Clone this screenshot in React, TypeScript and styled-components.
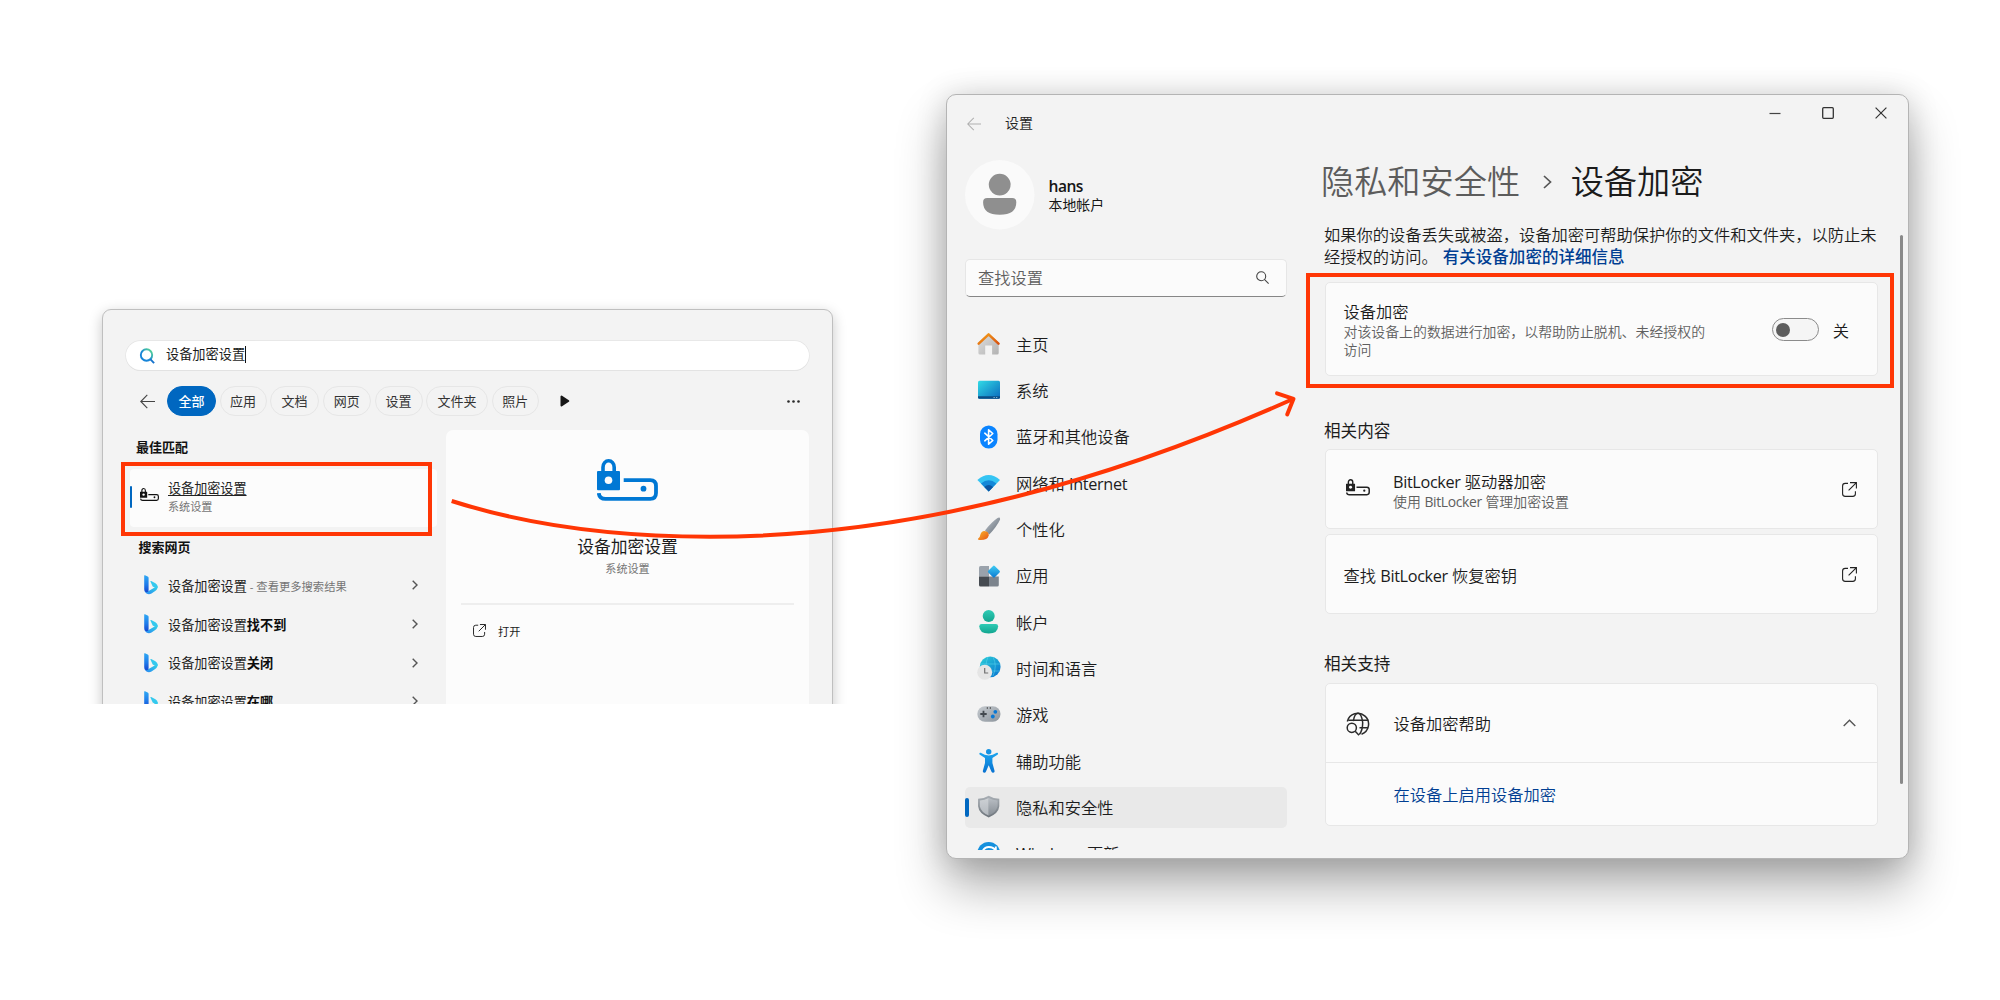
import React from "react";
import styled, { createGlobalStyle, css } from "styled-components";

const RED = "#ff3605";
const FONT = `"Open Sans", "Noto Sans CJK SC", sans-serif`;

const GlobalStyle = createGlobalStyle`
  * { box-sizing: border-box; }
  body {
    margin: 0;
    background: #fff;
    font-family: ${FONT};
    color: #1b1b1b;
    overflow: hidden;
  }
  svg { display: block; flex: none; }
`;

const Desktop = styled.main`
  position: relative;
  width: 2000px;
  height: 1000px;
  overflow: hidden;
`;

/* ---------- search flyout ---------- */

const FlyoutCrop = styled.div`
  position: absolute;
  left: 72px;
  top: 280px;
  width: 790px;
  height: 424px;
  padding: 29px 0 0 30px;
  overflow: hidden;
`;

const Flyout = styled.section`
  width: 731px;
  height: 460px;
  padding: 31px 23px 0;
  border: 1px solid #bfbfbf;
  border-radius: 9px;
  background: #f3f3f3;
  box-shadow: 0 4px 14px rgba(0, 0, 0, 0.22);
`;

const SearchPill = styled.div`
  display: flex;
  align-items: center;
  gap: 11px;
  height: 29px;
  padding-left: 13px;
  border-radius: 15px;
  background: #fff;
  box-shadow: 0 0 0 0.7px #e4e4e4, 0 1px 0 #dedede;
  font-size: 13.2px;
  line-height: 20px;
`;

const Query = styled.span`
  height: 17px;
  margin-bottom: 2px;
  line-height: 17px;
  border-right: 1px solid #111;
`;

const Filters = styled.div`
  display: flex;
  align-items: center;
  height: 30px;
  margin-top: 16px;
  padding: 0 9px 0 14px;
`;

const ChipRow = styled.div`
  display: flex;
  gap: 3.5px;
  margin: 0 21px 0 12px;
`;

const Chip = styled.span<{ $w: number; $active?: boolean }>`
  display: flex;
  align-items: center;
  justify-content: center;
  width: ${(p) => p.$w}px;
  height: 30px;
  padding-bottom: 2px;
  border: 1px solid #e6e6e6;
  border-radius: 15px;
  font-size: 13px;
  color: #333;
  ${(p) =>
    p.$active &&
    css`
      border-color: #0067c0;
      background: #0067c0;
      color: #fff;
      font-weight: 500;
    `}
`;

const Spacer = styled.span`
  flex: 1;
`;

const FlyoutBody = styled.div`
  display: grid;
  grid-template-columns: 320px 363px;
  margin-top: 13.5px;
`;

const Results = styled.div`
  padding-top: 7px;
`;

const GroupTitle = styled.h2<{ $indent: number; $top?: number }>`
  margin: ${(p) => p.$top ?? 0}px 0 0 ${(p) => p.$indent}px;
  font-size: 13px;
  line-height: 20px;
  font-weight: 700;
  color: #111;
`;

const BestMatch = styled.div`
  display: flex;
  align-items: center;
  width: 307.5px;
  height: 58px;
  margin: 12px 0 0 3.5px;
  padding-bottom: 2px;
  border-radius: 4px;
  background: #fcfcfc;
`;

const AccentBar = styled.span<{ $w: number; $h: number }>`
  flex: none;
  width: ${(p) => p.$w}px;
  height: ${(p) => p.$h}px;
  border-radius: 2px;
  background: #0067c0;
`;

const BestIcon = styled.span`
  margin: 0 9px 3px 8px;
`;

const BestText = styled.div`
  display: flex;
  flex-direction: column;
`;

const BestTitle = styled.span`
  font-size: 13.1px;
  line-height: 19px;
  text-decoration: underline;
  text-underline-offset: 1.5px;
  color: #222;
`;

const Caption = styled.span`
  font-size: 11.1px;
  line-height: 17px;
  color: #757575;
`;

const WebList = styled.div`
  margin-top: 9px;
`;

const WebRow = styled.div`
  display: flex;
  align-items: center;
  height: 38.7px;
  padding: 0 28px 0 17.5px;
  font-size: 13.15px;
  color: #1d1d1d;
`;

const WebLabel = styled.span`
  margin-left: 10.5px;
  white-space: pre;
  b { font-weight: 700; color: #0c0c0c; }
`;

const WebNote = styled(Caption)`
  font-size: 11.3px;
`;

const Detail = styled.div`
  display: flex;
  flex-direction: column;
  align-items: center;
  height: 320px;
  padding: 29.5px 15px 0;
  border-radius: 7px;
  background: #fcfcfc;
`;

const DetailTitle = styled.h1`
  margin: 33.5px 0 0;
  font-size: 16.8px;
  line-height: 24px;
  font-weight: 400;
  color: #1a1a1a;
`;

const DetailCaption = styled(Caption)`
  margin-top: 1px;
`;

const DetailRule = styled.hr`
  width: 333px;
  height: 2px;
  margin: 26px 0 0;
  border: 0;
  background: #eee;
`;

const OpenAction = styled.div`
  display: flex;
  align-items: center;
  gap: 12.5px;
  align-self: flex-start;
  margin: 16px 0 0 11.5px;
  height: 20px;
  font-size: 11.2px;
`;

/* ---------- settings window ---------- */

const SettingsWindow = styled.section`
  position: absolute;
  left: 946px;
  top: 94px;
  width: 963px;
  height: 765px;
  border: 1px solid #b4b4b4;
  border-radius: 10px;
  background: #f3f3f3;
  box-shadow: 0 28px 50px rgba(0, 0, 0, 0.31), 0 2px 30px rgba(0, 0, 0, 0.17);
  font-weight: 350;
`;

const TitleBar = styled.header`
  display: flex;
  justify-content: space-between;
  height: 57px;
`;

const TitleLeft = styled.div`
  display: flex;
  align-items: center;
  gap: 24px;
  padding: 0 0 0 20px;
  font-size: 14px;
  line-height: 20px;
  color: #222;
`;

const TitleText = styled.span`
  margin-bottom: 1px;
`;

const WindowButtons = styled.div`
  display: flex;
  height: 36px;
  margin-right: 1px;
`;

const WindowButton = styled.button`
  display: flex;
  align-items: center;
  justify-content: center;
  width: 52.8px;
  padding: 0;
  border: 0;
  background: none;
`;

const SettingsBody = styled.div`
  display: grid;
  grid-template-columns: 360px 575px 3px;
  padding-left: 18px;
`;

const Sidebar = styled.aside`
  width: 322px;
  padding-top: 8px;
`;

const Profile = styled.div`
  display: flex;
  align-items: center;
  gap: 14px;
  height: 69.5px;
`;

const ProfileText = styled.div`
  display: flex;
  flex-direction: column;
  padding-top: 1px;
  font-size: 13.9px;
  line-height: 18px;
  font-weight: 400;
  color: #161616;
`;

const ProfileName = styled.strong`
  font-size: 15.6px;
  line-height: 20px;
  font-weight: 600;
  letter-spacing: -0.5px;
`;

const FindBox = styled.div`
  display: flex;
  align-items: center;
  justify-content: space-between;
  height: 38px;
  margin-top: 29.5px;
  padding: 0 17px 2px 12px;
  border: 1px solid #e6e6e6;
  border-bottom-color: #868686;
  border-radius: 5px;
  background: #fbfbfb;
  font-size: 16.25px;
  color: #5f5f5f;
`;

const Nav = styled.nav`
  display: flex;
  flex-direction: column;
  gap: 5px;
  height: 526px;
  margin-top: 26.5px;
  overflow: hidden;
`;

const NavItem = styled.div<{ $selected?: boolean }>`
  display: flex;
  flex: none;
  align-items: center;
  height: 41.33px;
  padding-left: ${(p) => (p.$selected ? 0 : 12)}px;
  border-radius: 5px;
  background: ${(p) => (p.$selected ? "#e9e9e9" : "transparent")};
  font-size: 16.25px;
  color: #1c1c1c;
  svg { margin-left: ${(p) => (p.$selected ? 8 : 0)}px; }
`;

const NavLabel = styled.span`
  margin: 0 0 1px 15px;
`;

const Latin = styled.span`
  font-weight: 400;
  letter-spacing: -0.35px;
`;

const Main = styled.div`
  width: 552.5px;
  padding-top: 8px;
`;

const Crumbs = styled.h1`
  display: flex;
  align-items: center;
  height: 44px;
  margin: 0 0 0 -4px;
  font-size: 33.2px;
  line-height: 44px;
  font-weight: 350;
  white-space: nowrap;
`;

const CrumbParent = styled.span`
  color: #5c5c5c;
`;

const CrumbArrow = styled.span`
  display: flex;
  width: 50.5px;
  padding: 0 0 0 23px;
`;

const Intro = styled.p`
  margin: 19.5px 0 0 -1px;
  font-size: 16.25px;
  line-height: 22px;
  white-space: nowrap;
  color: #1c1c1c;
`;

const Link = styled.a`
  color: #003e92;
`;

const IntroLink = styled(Link)`
  margin-left: 5px;
  font-weight: 500;
  font-size: 16.55px;
`;

const Card = styled.div<{ $h: number; $top: number }>`
  display: flex;
  align-items: center;
  height: ${(p) => p.$h}px;
  margin-top: ${(p) => p.$top}px;
  padding: 0 20px 0 17.5px;
  border: 1px solid #e7e7e7;
  border-radius: 5px;
  background: #fbfbfb;
  font-size: 16.25px;
`;

const CardText = styled.div<{ $left?: number; $drop?: number }>`
  display: flex;
  flex-direction: column;
  flex: 1;
  padding-top: ${(p) => p.$drop ?? 0}px;
  margin-left: ${(p) => p.$left ?? 0}px;
  line-height: 21px;
`;

const CardNote = styled.span`
  font-size: 13.92px;
  line-height: 18px;
  color: #5f5f5f;
`;

const DriveSlot = styled.span`
  margin: 0 0 3px 2px;
`;

const ExternalSlot = styled.span`
  margin-top: 2px;
`;

const Toggle = styled.span`
  display: flex;
  align-items: center;
  width: 47px;
  height: 23.5px;
  margin: 1px 13.5px 0 0;
  padding-left: 3px;
  border: 1px solid #8b8b8b;
  border-radius: 12px;
  background: #f5f5f5;
`;

const Knob = styled.span`
  width: 14px;
  height: 14px;
  border-radius: 50%;
  background: #5d5d5d;
`;

const ToggleState = styled.span`
  margin: 1px 7.5px 0 0;
`;

const SectionTitle = styled.h2<{ $top: number }>`
  margin: ${(p) => p.$top}px 0 0 -1px;
  font-size: 16.6px;
  line-height: 24px;
  font-weight: 400;
  color: #1c1c1c;
`;

const Expander = styled.div`
  height: 143px;
  margin-top: 7.5px;
  border: 1px solid #e7e7e7;
  border-radius: 5px;
  background: #fbfbfb;
  font-size: 16.25px;
`;

const ExpanderHead = styled.div`
  display: flex;
  align-items: center;
  height: 78.5px;
  padding: 3px 20.5px 0 19.5px;
  border-bottom: 1px solid #e7e7e7;
`;

const ExpandChevron = styled.span`
  margin-bottom: 2px;
`;

const ExpanderBody = styled.div`
  padding: 20px 0 0 67.5px;
  line-height: 24px;
`;

const ScrollThumb = styled.div`
  width: 3px;
  height: 549px;
  margin-top: 83px;
  border-radius: 2px;
  background: #8a8a8a;
`;

/* ---------- annotations over the windows ---------- */

const Callout = styled.div<{ $x: number; $y: number; $w: number; $h: number }>`
  position: absolute;
  left: ${(p) => p.$x}px;
  top: ${(p) => p.$y}px;
  width: ${(p) => p.$w}px;
  height: ${(p) => p.$h}px;
  border: 4px solid ${RED};
`;

const ArrowLayer = styled.svg`
  position: absolute;
  left: 0;
  top: 0;
`;

/* ---------- icons ---------- */

const DriveLock = ({ w, color, hole = "#fcfcfc" }: { w: number; color: string; hole?: string }) => (
  <svg width={w} height={(w * 42) / 61} viewBox="0 0 61 42">
    <path d="M6 12.5V8.2a5.6 6.4 0 0 1 11.2 0v4.3" fill="none" stroke={color} strokeWidth="3.6" />
    <rect x="0" y="12" width="23" height="19.2" rx="1" fill={color} />
    <circle cx="11.5" cy="21.2" r="3.8" fill={hole} />
    <path
      d="M26.7 21.2h26.5q5.8 0 5.8 5.8v7q0 5.8-5.8 5.8H8.5q-6.2 0-6.7-5.6"
      fill="none"
      stroke={color}
      strokeWidth="3.8"
    />
    <circle cx="46.5" cy="29.7" r="2.9" fill={color} />
  </svg>
);

const BackArrow = ({ color, w = 15 }: { color: string; w?: number }) => (
  <svg width={w} height={w} viewBox="0 0 15 15" fill="none" stroke={color} strokeWidth="1.1">
    <path d="M15 7.5H.8M7.3.9.8 7.5l6.5 6.6" />
  </svg>
);

const OpenIcon = ({ w }: { w: number }) => (
  <svg width={w} height={w} viewBox="0 0 15 15" fill="none" stroke="#222" strokeWidth="1.1">
    <path d="M6 1.4H3.2Q.6 1.4.6 4v7.8q0 2.6 2.6 2.6h7.6q2.6 0 2.6-2.6V9.2" />
    <path d="M8 .6h6.400v6M14.2.8 6.6 8.4" />
  </svg>
);

const Chevron = ({ w, h, d, sw = 1.4 }: { w: number; h: number; d: string; sw?: number }) => (
  <svg width={w} height={h} viewBox={`0 0 ${w} ${h}`} fill="none" stroke="#555" strokeWidth={sw}>
    <path d={d} />
  </svg>
);

const BingIcon = () => (
  <svg width="14" height="20" viewBox="0 0 14 20">
    <defs>
      <linearGradient id="bStem" x1="0" y1="0" x2="0" y2="1">
        <stop offset="0" stopColor="#2fa9f4" />
        <stop offset="0.55" stopColor="#1f7bea" />
        <stop offset="1" stopColor="#1546cf" />
      </linearGradient>
      <linearGradient id="bBowl" x1="0" y1="1" x2="1" y2="0">
        <stop offset="0" stopColor="#2a86f3" />
        <stop offset="1" stopColor="#2fd8e4" />
      </linearGradient>
    </defs>
    <path d="M.4 15.200q1.500 2.200 4.200.9l5.600-3.300 3.400-1.800q.4 3.200-2.400 4.900l-3.700 2.600q-2.600 1.300-5 0-2-1.200-2.100-3.300z" fill="url(#bBowl)" />
    <path d="M.2.600Q.3 0 1 .3l2.700 1.200q.9.4.9 1.400v12.600q-.2 1.700-1.900 1.800Q.2 17 .2 14z" fill="url(#bStem)" />
    <path d="M6.300 6.300q.2-.6.900-.3l4.200 2.200q2.500 1.300 2.300 4-.5 1.300-2.200.8L8.700 11.600z" fill="#34c9ee" />
  </svg>
);

const NavGlyph = ({ children }: { children: React.ReactNode }) => (
  <svg width="24" height="24" viewBox="0 0 24 24">{children}</svg>
);

const Grad = ({ id, a, b, x2 = 1, y2 = 1 }: { id: string; a: string; b: string; x2?: number; y2?: number }) => (
  <linearGradient id={id} x1="0" y1="0" x2={x2} y2={y2}>
    <stop offset="0" stopColor={a} />
    <stop offset="1" stopColor={b} />
  </linearGradient>
);

const HomeIcon = () => (
  <NavGlyph>
    <Grad id="hw" a="#dedede" b="#b2b2b2" />
    <Grad id="hr" a="#f6a21a" b="#d9520f" />
    <path d="M1.400 10.500 11.500 1.500l10.200 9V21q0 1.600-1.600 1.600h-5V13.500H8.200v9.100H3q-1.600 0-1.600-1.600z" fill="url(#hw)" />
    <path d="m1.700 11.600 9.900-9.300 9.900 9.300" fill="none" stroke="url(#hr)" strokeWidth="2.500" strokeLinecap="round" strokeLinejoin="round" />
  </NavGlyph>
);

const SystemIcon = () => (
  <NavGlyph>
    <Grad id="sy" a="#31dbe6" b="#0a68bd" />
    <rect x="1" y="2.800" width="22" height="18" rx="1.500" fill="url(#sy)" />
    <path d="M1 18.300h22v1q0 1.500-1.500 1.500h-19Q1 20.800 1 19.300z" fill="#0b4c86" />
    <path d="M16.500 19.500h1.300M19 19.500h1.300" stroke="#9cd" strokeWidth=".8" />
  </NavGlyph>
);

const BluetoothIcon = () => (
  <NavGlyph>
    <rect x="3" y=".5" width="17.500" height="23" rx="8.700" fill="#0a84ff" />
    <path d="m7.800 8.200 8 7.300-4.200 3.700V4.800l4.200 3.700-8 7.300" fill="none" stroke="#fff" strokeWidth="1.600" strokeLinejoin="round" strokeLinecap="round" />
  </NavGlyph>
);

const WifiIcon = () => (
  <NavGlyph>
    <path d="M.4 8.900Q11.700-.9 23 8.900L11.700 20.600z" fill="#35c4f3" />
    <path d="M4 12.600q7.700-6.800 15.400 0L11.700 20.600z" fill="#1488d8" />
    <path d="M7.300 16q4.400-3.900 8.800 0l-4.400 4.600z" fill="#0c56a3" />
  </NavGlyph>
);

const BrushIcon = () => (
  <NavGlyph>
    <Grad id="bh" a="#c1c7ce" b="#606a75" />
    <Grad id="bt" a="#fbb62b" b="#e65514" />
    <path d="M8 13.500Q14 5.500 20.500 1q3-1.300 2.500 1.700Q19.500 10 12.200 17.500z" fill="url(#bh)" />
    <path d="M7.300 13.900q4.700.3 4.500 4.500-1.500 5-9.300 4.600-2.300-.2-1.300-1.400 1.900-1.400 2.200-4.200 1-3.300 3.900-3.500z" fill="url(#bt)" />
  </NavGlyph>
);

const AppsIcon = () => (
  <NavGlyph>
    <Grad id="ap" a="#41cff5" b="#0876cf" />
    <path d="M2 3.600q0-1.600 1.600-1.600H12v10.500H2z" fill="#9aa2ab" />
    <path d="M2 12.500h10v10H3.600Q2 22.500 2 20.900z" fill="#464b51" />
    <path d="M12 12.500h9.800v8.400q0 1.600-1.600 1.600H12z" fill="#7c848d" />
    <rect x="12.300" y="3.100" width="9.200" height="9.200" rx="1.200" transform="rotate(45 16.900 7.700)" fill="url(#ap)" />
  </NavGlyph>
);

const AccountIcon = () => (
  <NavGlyph>
    <Grad id="ac" a="#2fcbb5" b="#12a58f" x2={0} />
    <circle cx="11.700" cy="6" r="6" fill="url(#ac)" />
    <path d="M4.600 14h14.200q2.300 0 2.300 2.300 0 7.200-9.400 7.200t-9.400-7.200Q2.300 14 4.600 14z" fill="url(#ac)" />
  </NavGlyph>
);

const TimeIcon = () => (
  <NavGlyph>
    <Grad id="gl" a="#2cd0d8" b="#0871cf" />
    <circle cx="13.200" cy="10.800" r="10.400" fill="url(#gl)" />
    <path d="M3.500 8h20M11 .8q-4 9 0 19M16 .8q4.500 9 0 19M4 15h19" fill="none" stroke="#62dcf0" strokeWidth=".8" opacity=".6" />
    <circle cx="7.700" cy="16.200" r="7.500" fill="#e5e5e5" />
    <path d="M7.700 12v5h3.500" fill="none" stroke="#707070" strokeWidth="1.200" />
  </NavGlyph>
);

const GameIcon = () => (
  <NavGlyph>
    <Grad id="gm" a="#c6cbd0" b="#8c949c" />
    <rect x=".3" y="3.300" width="23.200" height="15.500" rx="7.700" fill="url(#gm)" />
    <path d="M6.500 7.800v6.400M3.300 11h6.400" stroke="#43494f" strokeWidth="1.800" />
    <path d="M10.300 4v2M13.300 4v2" stroke="#555" />
    <circle cx="18.300" cy="8.800" r="1.900" fill="#0a78d4" />
    <circle cx="15.800" cy="13.500" r="1.900" fill="#0a78d4" />
  </NavGlyph>
);

const AccessIcon = () => (
  <NavGlyph>
    <Grad id="as" a="#1ba4ee" b="#0871d0" x2={0} />
    <circle cx="11.700" cy="2.800" r="2.700" fill="#1592e2" />
    <path d="M3.700 3.800q-1.900-.4-1.100 1.700L8 9v5l-2.200 8q-.2 1.500 1.400 1.800 1.400 0 1.800-1.400l2.700-6.100 2.700 6.100q.4 1.400 1.800 1.400 1.600-.3 1.400-1.800L15.400 14V9l5.400-3.500q.8-2.100-1.100-1.700-4 2.600-8 2.600t-8-2.600z" fill="url(#as)" />
  </NavGlyph>
);

const ShieldIcon = () => (
  <NavGlyph>
    <Grad id="shRim" a="#a9afb5" b="#6d747b" x2={0} />
    <Grad id="shL" a="#cdd1d5" b="#b3b8be" x2={0} />
    <Grad id="shR" a="#b9bec4" b="#878e95" x2={0} />
    <path d="M11.700.8q4.500 2.900 10.600 3v7.500q-.7 7.300-10.600 11.100Q1.800 18.600 1.100 11.300V3.800q6.100-.1 10.600-3z" fill="url(#shRim)" />
    <path d="M11.700 3Q7.500 5.300 2.800 5.600v5.700q1.400 6.200 8.900 9.300z" fill="url(#shL)" />
    <path d="M11.700 3q4.200 2.300 8.900 2.600v5.700q-1.400 6.200-8.900 9.300z" fill="url(#shR)" />
  </NavGlyph>
);

const UpdateIcon = () => (
  <NavGlyph>
    <circle cx="11.700" cy="11.500" r="11.500" fill="#1590dd" />
    <path d="M5 10.500q2-5.500 6.800-5.500T18.500 8.500M18.800 4.500V9h-4.300" fill="none" stroke="#fff" strokeWidth="1.900" />
  </NavGlyph>
);

const GlobeSearch = () => (
  <svg width="24" height="24" viewBox="0 0 24 24" fill="none" stroke="#2b2b2b" strokeWidth="1.500">
    <path d="M1.300 9.500A10.800 10.800 0 1 1 15.500 22.300" />
    <path d="M2.300 8.200h20M13.500 15.800h8.700" />
    <path d="M7.300 9.200Q8.500 1.200 12 1.200t4.700 9.300q0 8-3.400 12" />
    <circle cx="5.800" cy="15.800" r="4.600" />
    <path d="m9.200 19.200 3.800 4" />
  </svg>
);

const Avatar = () => (
  <svg width="69.500" height="69.500" viewBox="0 0 69.500 69.500">
    <circle cx="34.750" cy="34.750" r="34.750" fill="#fafafa" />
    <circle cx="34.700" cy="24.600" r="10.900" fill="#8f8f8f" />
    <path d="M22.200 38h25q4.100 0 4.100 4.200 0 12.500-16.600 12.500T18.100 42.200Q18.100 38 22.200 38z" fill="#8f8f8f" />
  </svg>
);

/* ---------- page ---------- */

const chips: [string, number][] = [
  ["全部", 49],
  ["应用", 47],
  ["文档", 49],
  ["网页", 48.5],
  ["设置", 48],
  ["文件夹", 62],
  ["照片", 47.5],
];

const webRows = [
  { suffix: "", note: " - 查看更多搜索结果" },
  { suffix: "找不到" },
  { suffix: "关闭" },
  { suffix: "在哪" },
];

const navItems: [string, React.FC][] = [
  ["主页", HomeIcon],
  ["系统", SystemIcon],
  ["蓝牙和其他设备", BluetoothIcon],
  ["网络和 Internet", WifiIcon],
  ["个性化", BrushIcon],
  ["应用", AppsIcon],
  ["帐户", AccountIcon],
  ["时间和语言", TimeIcon],
  ["游戏", GameIcon],
  ["辅助功能", AccessIcon],
  ["隐私和安全性", ShieldIcon],
  ["Windows 更新", UpdateIcon],
];

/* Sets Latin words slightly tighter than the Chinese text round them. */
const Mixed = ({ text }: { text: string }) => (
  <span>
    {text.split(/([A-Za-z]+)/).map((part, i) => (i % 2 ? <Latin key={i}>{part}</Latin> : part))}
  </span>
);

const SearchFlyout = () => (
  <FlyoutCrop>
    <Flyout>
      <SearchPill>
        <svg width="16" height="16" viewBox="0 0 16 16" fill="none" strokeWidth="1.900">
          <linearGradient id="sg" x1="0" y1="1" x2="1" y2="0">
            <stop offset="0.400" stopColor="#1684d8" />
            <stop offset="1" stopColor="#5fe08a" />
          </linearGradient>
          <circle cx="7.500" cy="7" r="5.700" stroke="url(#sg)" />
          <path d="m11.500 11.300 3.600 3.800" stroke="#1673cc" />
        </svg>
        <Query>设备加密设置</Query>
      </SearchPill>
      <Filters>
        <BackArrow color="#444" />
        <ChipRow>
          {chips.map(([label, w], i) => (
            <Chip key={label} $w={w} $active={i === 0}>{label}</Chip>
          ))}
        </ChipRow>
        <svg width="10" height="12" viewBox="0 0 10 12">
          <path d="M1.500 1.500v9L8.300 6z" fill="#161616" stroke="#161616" strokeWidth="2" strokeLinejoin="round" />
        </svg>
        <Spacer />
        <svg width="13" height="3" viewBox="0 0 13 3" fill="#2a2a2a">
          <circle cx="1.500" cy="1.500" r="1.300" />
          <circle cx="6.500" cy="1.500" r="1.300" />
          <circle cx="11.500" cy="1.500" r="1.300" />
        </svg>
      </Filters>
      <FlyoutBody>
        <Results>
          <GroupTitle $indent={10}>最佳匹配</GroupTitle>
          <BestMatch>
            <AccentBar $w={2.5} $h={22} />
            <BestIcon><DriveLock w={19} color="#111" /></BestIcon>
            <BestText>
              <BestTitle>设备加密设置</BestTitle>
              <Caption>系统设置</Caption>
            </BestText>
          </BestMatch>
          <GroupTitle $indent={12.5} $top={10.5}>搜索网页</GroupTitle>
          <WebList>
            {webRows.map((row) => (
              <WebRow key={row.suffix}>
                <BingIcon />
                <WebLabel>
                  设备加密设置<b>{row.suffix}</b>
                  {row.note && <WebNote>{row.note}</WebNote>}
                </WebLabel>
                <Spacer />
                <Chevron w={6} h={10} d="M.7.7 5 5 .7 9.300" />
              </WebRow>
            ))}
          </WebList>
        </Results>
        <Detail>
          <DriveLock w={61} color="#0078d4" />
          <DetailTitle>设备加密设置</DetailTitle>
          <DetailCaption>系统设置</DetailCaption>
          <DetailRule />
          <OpenAction>
            <OpenIcon w={13} />
            打开
          </OpenAction>
        </Detail>
      </FlyoutBody>
    </Flyout>
  </FlyoutCrop>
);

const Settings = () => (
  <SettingsWindow>
    <TitleBar>
      <TitleLeft>
        <BackArrow color="#b0b0b0" w={14} />
        <TitleText>设置</TitleText>
      </TitleLeft>
      <WindowButtons>
        <WindowButton>
          <svg width="12" height="12"><path d="M.5 6.500h11" stroke="#444" strokeWidth="1.200" /></svg>
        </WindowButton>
        <WindowButton>
          <svg width="12" height="12" fill="none"><rect x=".7" y=".7" width="10.600" height="10.600" rx="1" stroke="#333" strokeWidth="1.300" /></svg>
        </WindowButton>
        <WindowButton>
          <svg width="12" height="12"><path d="m.6.6 10.800 10.800M11.400.6.6 11.400" stroke="#333" strokeWidth="1.200" /></svg>
        </WindowButton>
      </WindowButtons>
    </TitleBar>
    <SettingsBody>
      <Sidebar>
        <Profile>
          <Avatar />
          <ProfileText>
            <ProfileName>hans</ProfileName>
            本地帐户
          </ProfileText>
        </Profile>
        <FindBox>
          查找设置
          <svg width="13" height="13" viewBox="0 0 13 13" fill="none" stroke="#444" strokeWidth="1.100">
            <circle cx="5.200" cy="5.200" r="4.500" />
            <path d="m8.400 8.400 4.200 4.200" />
          </svg>
        </FindBox>
        <Nav>
          {navItems.map(([label, Icon], i) => (
            <NavItem key={label} $selected={i === 10}>
              {i === 10 && <AccentBar $w={4} $h={19} />}
              <Icon />
              <NavLabel><Mixed text={label} /></NavLabel>
            </NavItem>
          ))}
        </Nav>
      </Sidebar>
      <Main>
        <Crumbs>
          <CrumbParent>隐私和安全性</CrumbParent>
          <CrumbArrow><Chevron w={9} h={14} d="M1 1l6.500 6L1 13" sw={1.7} /></CrumbArrow>
          设备加密
        </Crumbs>
        <Intro>
          如果你的设备丢失或被盗，设备加密可帮助保护你的文件和文件夹，以防止未
          <br />
          经授权的访问。<IntroLink>有关设备加密的详细信息</IntroLink>
        </Intro>
        <Card $h={94} $top={14.5}>
          <CardText $drop={3}>
            设备加密
            <CardNote>
              对该设备上的数据进行加密，以帮助防止脱机、未经授权的
              <br />
              访问
            </CardNote>
          </CardText>
          <Toggle><Knob /></Toggle>
          <ToggleState>关</ToggleState>
        </Card>
        <SectionTitle $top={42.5}>相关内容</SectionTitle>
        <Card $h={79.5} $top={6.5}>
          <DriveSlot><DriveLock w={24} color="#222" hole="#fbfbfb" /></DriveSlot>
          <CardText $left={23.5} $drop={5}>
            <Mixed text="BitLocker 驱动器加密" />
            <CardNote><Mixed text="使用 BitLocker 管理加密设置" /></CardNote>
          </CardText>
          <ExternalSlot><OpenIcon w={15} /></ExternalSlot>
        </Card>
        <Card $h={79.5} $top={5.5}>
          <CardText $drop={5}><Mixed text="查找 BitLocker 恢复密钥" /></CardText>
          <ExternalSlot><OpenIcon w={15} /></ExternalSlot>
        </Card>
        <SectionTitle $top={38}>相关支持</SectionTitle>
        <Expander>
          <ExpanderHead>
            <GlobeSearch />
            <CardText $left={24} $drop={1}>设备加密帮助</CardText>
            <ExpandChevron><Chevron w={13} h={8} d="M.7 7 6.500 1.200 12.300 7" /></ExpandChevron>
          </ExpanderHead>
          <ExpanderBody><Link>在设备上启用设备加密</Link></ExpanderBody>
        </Expander>
      </Main>
      <ScrollThumb />
    </SettingsBody>
  </SettingsWindow>
);

export default function App() {
  return (
    <Desktop>
      <GlobalStyle />
      <SearchFlyout />
      <Settings />
      <Callout $x={121} $y={461.5} $w={310.5} $h={74.5} />
      <Callout $x={1306} $y={273} $w={588} $h={115} />
      <ArrowLayer width="2000" height="1000" fill="none" stroke={RED} strokeWidth="4">
        <path d="M451.700 501C530 526 620 536.700 710 536.700C910 536.700 1105 483 1293 399" />
        <path d="M1277 393.300 1293.500 398.800 1287.200 414.500" strokeLinecap="round" strokeLinejoin="round" />
      </ArrowLayer>
    </Desktop>
  );
}
